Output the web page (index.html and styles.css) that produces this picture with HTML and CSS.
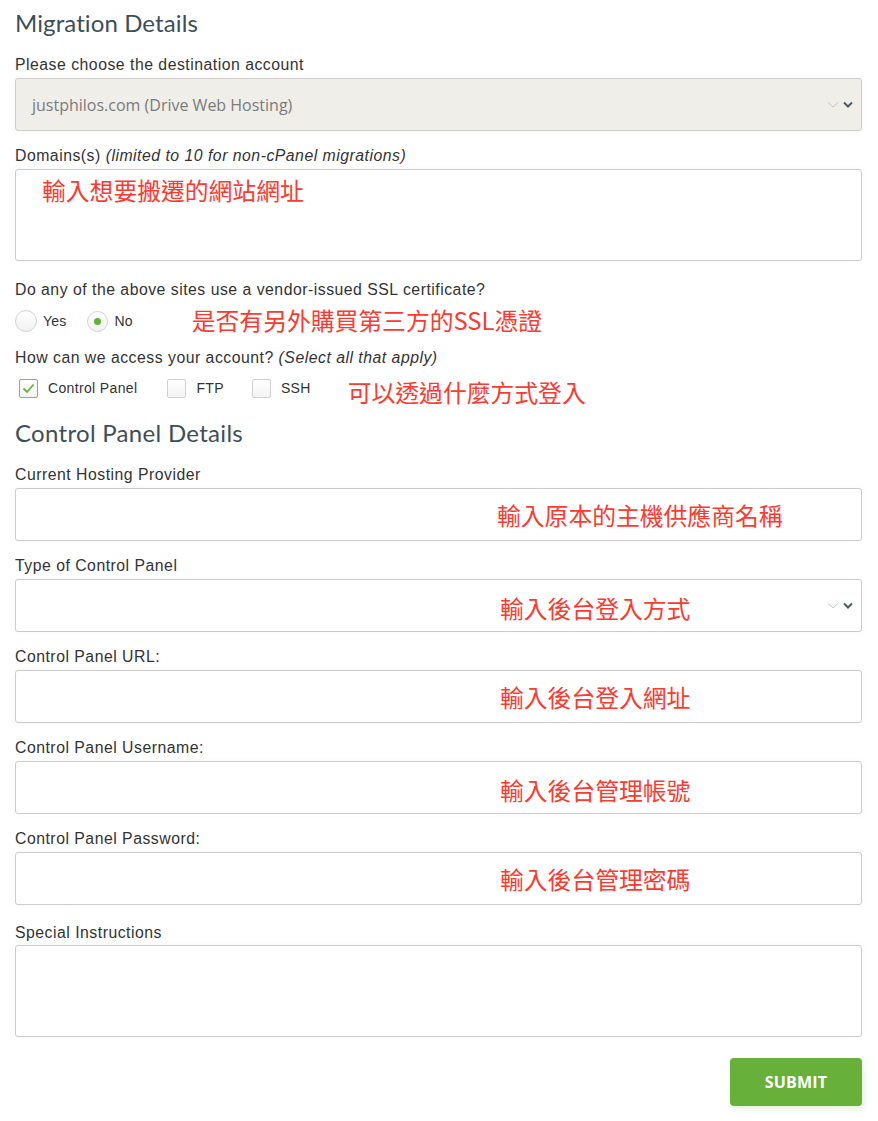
FILE: index.html
```html
<!DOCTYPE html>
<html lang="en">
<head>
<meta charset="utf-8">
<title>Migration Details</title>
<link rel="stylesheet" href="styles.css">
</head>
<body>
<form class="page">
  <h2 class="section-title">Migration Details</h2>

  <div class="group">
    <label class="label">Please choose the destination account</label>
    <div class="field select disabled">
      <span class="select-value">justphilos.com (Drive Web Hosting)</span>
      <span class="chevrons">
        <svg width="12" height="8" viewBox="0 0 12 8"><path d="M1 1.5 L6 6 L11 1.5" fill="none" stroke="#c4c4c4" stroke-width="1"/></svg>
        <svg width="10" height="8" viewBox="0 0 10 8"><path d="M1 1.5 L5 5.5 L9 1.5" fill="none" stroke="#4c5b63" stroke-width="2"/></svg>
      </span>
    </div>
  </div>

  <div class="group">
    <label class="label">Domains(s) <em>(limited to 10 for non-cPanel migrations)</em></label>
    <div class="field textarea domains"><span class="note">輸入想要搬遷的網站網址</span></div>
  </div>

  <div class="group ssl">
    <label class="label">Do any of the above sites use a vendor-issued SSL certificate?</label>
    <div class="choice-row">
      <span class="radio"></span><span class="choice-text yes">Yes</span>
      <span class="radio on"><span class="dot"></span></span><span class="choice-text">No</span>
      <span class="note ssl-note">是否有另外購買第三方的SSL憑證</span>
    </div>
  </div>

  <div class="group access">
    <label class="label">How can we access your account? <em>(Select all that apply)</em></label>
    <div class="choice-row checks">
      <span class="check on">
        <svg width="13" height="11" viewBox="0 0 13 11"><path d="M1.5 5.5 L5 9 L11.5 1.5" fill="none" stroke="#6aae3e" stroke-width="1.8"/></svg>
      </span><span class="choice-text cp">Control Panel</span>
      <span class="check"></span><span class="choice-text ftp">FTP</span>
      <span class="check"></span><span class="choice-text ssh">SSH</span>
      <span class="note access-note">可以透過什麼方式登入</span>
    </div>
  </div>

  <h2 class="section-title second">Control Panel Details</h2>

  <div class="group">
    <label class="label">Current Hosting Provider</label>
    <div class="field input"><span class="note n1">輸入原本的主機供應商名稱</span></div>
  </div>

  <div class="group">
    <label class="label">Type of Control Panel</label>
    <div class="field input select">
      <span class="note n2 type">輸入後台登入方式</span>
      <span class="chevrons">
        <svg width="12" height="8" viewBox="0 0 12 8"><path d="M1 1.5 L6 6 L11 1.5" fill="none" stroke="#c4c4c4" stroke-width="1"/></svg>
        <svg width="10" height="8" viewBox="0 0 10 8"><path d="M1 1.5 L5 5.5 L9 1.5" fill="none" stroke="#4c5b63" stroke-width="2"/></svg>
      </span>
    </div>
  </div>

  <div class="group">
    <label class="label">Control Panel URL:</label>
    <div class="field input"><span class="note n2">輸入後台登入網址</span></div>
  </div>

  <div class="group">
    <label class="label">Control Panel Username:</label>
    <div class="field input"><span class="note n2 low">輸入後台管理帳號</span></div>
  </div>

  <div class="group">
    <label class="label">Control Panel Password:</label>
    <div class="field input"><span class="note n2">輸入後台管理密碼</span></div>
  </div>

  <div class="group special">
    <label class="label">Special Instructions</label>
    <div class="field textarea instructions"></div>
  </div>

  <div class="actions">
    <button type="button" class="submit">SUBMIT</button>
  </div>
</form>
</body>
</html>
```

FILE: styles.css
```css
* { box-sizing: border-box; }

html, body {
  margin: 0;
  padding: 0;
  background: #ffffff;
}

.page {
  padding: 7px 16px 20px 15px;
  font-family: "Liberation Sans", Arial, sans-serif;
  color: #333333;
}

.section-title {
  margin: 0 0 15px 0;
  font-family: "Lato", "Open Sans", sans-serif;
  font-weight: 400;
  font-size: 24px;
  line-height: 32px;
  color: #3d4e57;
  letter-spacing: 0.1px;
}

.section-title.second {
  margin-top: 0;
  margin-bottom: 15px;
  letter-spacing: 0.3px;
}

.group {
  display: flex;
  flex-direction: column;
  margin-bottom: 14px;
}

.label {
  display: block;
  font-size: 15.8px;
  line-height: 21px;
  letter-spacing: 0.5px;
  margin-bottom: 3px;
  color: #333333;
}

.label em {
  font-style: italic;
}

.field {
  border: 1px solid #cccccc;
  border-radius: 3px;
  background: #ffffff;
  box-shadow: 0 0 6px rgba(0, 0, 0, 0.035);
}

.select {
  display: flex;
  align-items: center;
  height: 53px;
  padding: 0 8px 0 16px;
}

.select.disabled {
  background: #efeee9;
}

.select-value {
  flex: 1;
  font-family: "Open Sans", sans-serif;
  font-size: 16px;
  color: #7b7b7b;
}

.chevrons {
  display: flex;
  align-items: center;
  gap: 4px;
  margin-left: auto;
}

.input {
  display: flex;
  align-items: center;
  height: 53px;
}

.input.select {
  padding: 0 8px 0 0;
}

.textarea {
  height: 92px;
}

.domains {
  padding: 5px 0 0 26px;
}

.note {
  font-family: "Noto Sans CJK TC", "Noto Sans CJK SC", sans-serif;
  font-size: 23.8px;
  line-height: 30px;
  color: #fd3a2f;
  white-space: nowrap;
}

.n1 { margin-left: 481px; }
.n2 { margin-left: 484px; }
.n2.type { margin-top: 5px; }
.n2.low { margin-top: 5px; }

.ssl {
  margin-top: 18px;
  margin-bottom: 13px;
}

.ssl .label { margin-bottom: 8px; }

.choice-row {
  display: flex;
  align-items: center;
  height: 26px;
}

.radio {
  width: 22px;
  height: 22px;
  border-radius: 50%;
  border: 1px solid #d3d3d3;
  background: linear-gradient(#ffffff, #f1f1f1);
  display: flex;
  align-items: center;
  justify-content: center;
  flex: none;
}

.radio.on { width: 21px; height: 21px; }

.dot {
  width: 7px;
  height: 7px;
  border-radius: 50%;
  background: #5fb235;
}

.choice-text {
  font-size: 14px;
  color: #333333;
  margin-left: 6px;
  letter-spacing: 0.2px;
}

.choice-text.yes { margin-right: 21px; }

.ssl-note { margin-left: 59px; margin-top: -2px; }

.access { margin-bottom: 16px; }
.access .label { margin-bottom: 7px; }

.checks { padding-left: 4px; }

.check {
  width: 19px;
  height: 19px;
  border: 1px solid #d0d0d0;
  border-radius: 2px;
  background: linear-gradient(#ffffff, #f3f3f3);
  display: flex;
  align-items: center;
  justify-content: center;
  flex: none;
}

.check.on { border-color: #7cbf55; }

.checks .choice-text { margin-left: 10px; font-size: 14px; letter-spacing: 0.35px; }
.choice-text.cp { margin-right: 30px; }
.choice-text.ftp { margin-right: 28px; }

.access-note { margin-left: 37px; margin-top: 8px; }

.special { margin-top: 17px; margin-bottom: 21px; }
.special .label { margin-bottom: 2px; }
.instructions { height: 92px; }

.actions {
  display: flex;
  justify-content: flex-end;
}

.submit {
  width: 132px;
  height: 48px;
  border: none;
  border-radius: 4px;
  background: #67b13b;
  color: #ffffff;
  font-family: "Open Sans", sans-serif;
  font-weight: 700;
  font-size: 16px;
  letter-spacing: 0.2px;
  box-shadow: 2px 3px 6px rgba(103, 177, 59, 0.18);
  cursor: pointer;
}
```
